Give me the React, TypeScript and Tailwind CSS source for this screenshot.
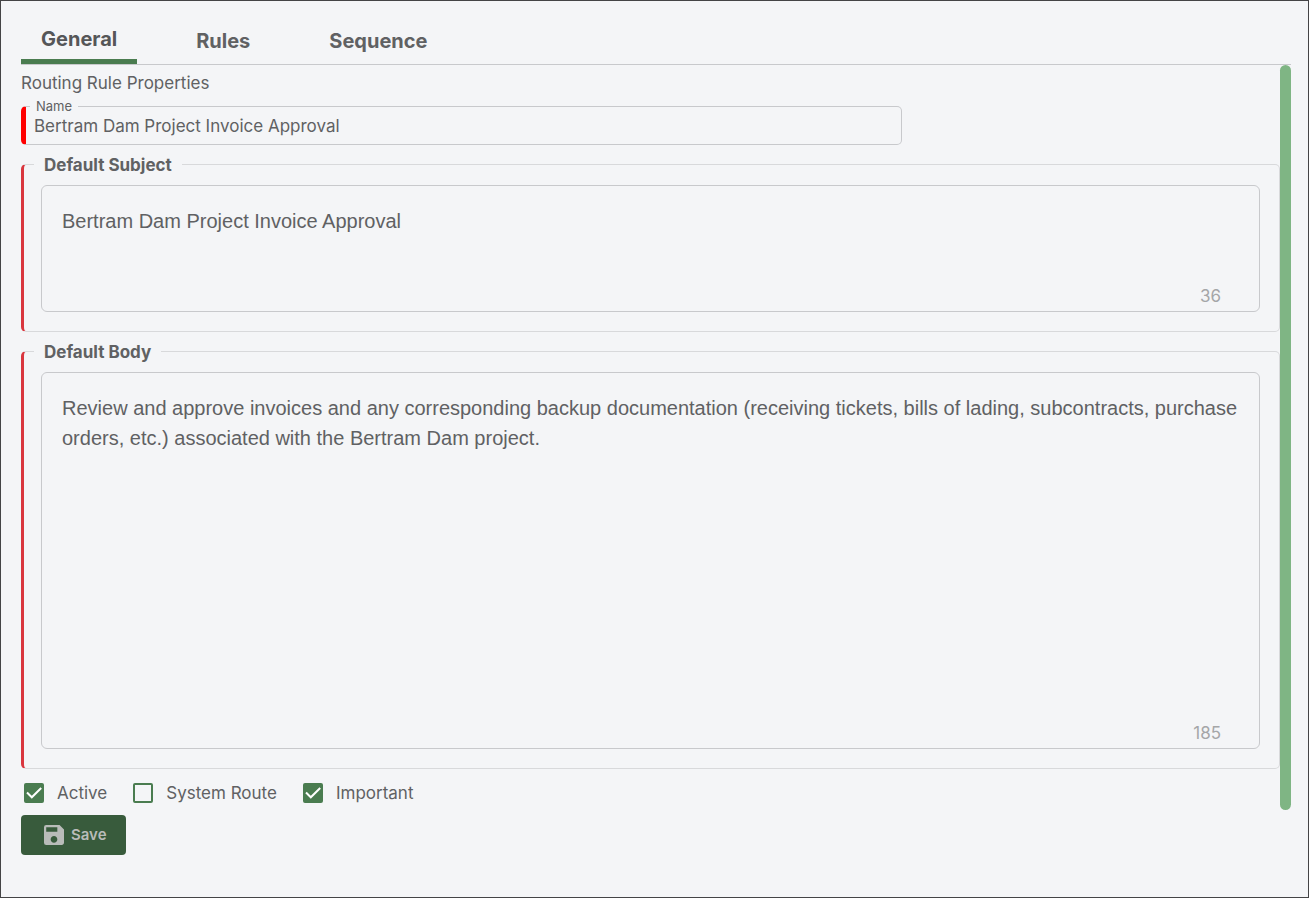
// App.tsx - Routing rule editor, General tab
import { useState } from "react";

const TABS = ["General", "Rules", "Sequence"];

const BODY_TEXT =
  "Review and approve invoices and any corresponding backup documentation (receiving tickets, bills of lading, subcontracts, purchase orders, etc.) associated with the Bertram Dam project.";

function SaveIcon() {
  return (
    <svg viewBox="3 3 18 18" className="h-5 w-5" fill="currentColor" aria-hidden="true">
      <path d="M17 3H5a2 2 0 0 0-2 2v14a2 2 0 0 0 2 2h14c1.1 0 2-.9 2-2V7l-4-4zm-5 16c-1.66 0-3-1.34-3-3s1.34-3 3-3 3 1.34 3 3-1.34 3-3 3zm3-10H5V5h10v4z" />
    </svg>
  );
}

function TextBlock({ id, label, value, onChange, heightClass }: {
  id: string;
  label: string;
  value: string;
  onChange: (v: string) => void;
  heightClass: string;
}) {
  return (
    <fieldset className="min-w-0 rounded-[5px] border border-l-[3px] border-[#d8d9db] border-l-[#d9363e] pb-[19px]">
      <legend className="ml-[10px] px-[10px] pt-[2px] text-[17px] leading-5 font-bold">
        <label htmlFor={id}>{label}</label>
      </legend>
      <div className="relative mt-[10px] ml-[17px] mr-[19px]">
        <textarea
          id={id}
          value={value}
          onChange={(e) => onChange(e.target.value)}
          className={`block w-full resize-none rounded-md border border-[#c8c9cc] bg-transparent p-5 font-['Liberation_Sans',Arial,sans-serif] text-[20px] leading-[30px] outline-none ${heightClass}`}
        />
        <span className="absolute right-[39px] bottom-1 text-[17px] leading-6 text-[#a5a6a8]">{value.length}</span>
      </div>
    </fieldset>
  );
}

function CheckField({ label, initial }: { label: string; initial: boolean }) {
  const [checked, setChecked] = useState(initial);
  return (
    <label className="flex items-center gap-[13px] text-[17px] leading-6">
      <span className="relative h-5 w-5">
        <input
          type="checkbox"
          checked={checked}
          onChange={(e) => setChecked(e.target.checked)}
          className="block h-5 w-5 appearance-none rounded-[2px] border-2 border-[#4a7c50] checked:bg-[#4a7c50]"
        />
        {checked && (
          <svg viewBox="0 0 20 20" className="pointer-events-none absolute inset-0 h-5 w-5" fill="none" stroke="#fff" strokeWidth="2" aria-hidden="true">
            <path d="M3 9.5l4.8 4.8L17.2 5" />
          </svg>
        )}
      </span>
      {label}
    </label>
  );
}

export default function App() {
  const [active, setActive] = useState("General");
  const [name, setName] = useState("Bertram Dam Project Invoice Approval");
  const [subject, setSubject] = useState("Bertram Dam Project Invoice Approval");
  const [body, setBody] = useState(BODY_TEXT);

  return (
    <main className="min-h-screen border border-[#444446] bg-[#f4f5f7] pt-[18px] pr-[17px] pb-10 pl-5 font-[Inter,sans-serif] text-[#606163]">
      {/* Tabs */}
      <div role="tablist" className="flex h-[46px] gap-[39px] border-b border-[#c8c9cc]">
        {TABS.map((tab) => (
          <button
            key={tab}
            type="button"
            role="tab"
            aria-selected={active === tab}
            onClick={() => setActive(tab)}
            className={`px-5 text-[20px] font-bold ${active === tab ? "border-b-[5px] border-[#4a7c50] text-[#555658]" : "pb-[2px]"}`}
          >
            {tab}
          </button>
        ))}
      </div>

      <div className="flex">
        <div className="min-w-0 flex-1 pt-[6px] pb-[5px]">
          <h1 className="text-[17px] leading-6">Routing Rule Properties</h1>

          <fieldset className="mt-[3px] w-[70%] rounded-[5px] border border-l-[5px] border-[#c8c9cc] border-l-[#ff0000]">
            <legend className="ml-1 px-[6px] text-[13px] leading-4">
              <label htmlFor="rule-name">Name</label>
            </legend>
            <input
              id="rule-name"
              type="text"
              value={name}
              onChange={(e) => setName(e.target.value)}
              className="mt-px mb-[5px] block h-6 w-full bg-transparent px-2 text-[17px] outline-none"
            />
          </fieldset>

          <div className="mt-2 flex flex-col gap-2">
            <TextBlock id="default-subject" label="Default Subject" value={subject} onChange={setSubject} heightClass="h-[127px]" />
            <TextBlock id="default-body" label="Default Body" value={body} onChange={setBody} heightClass="h-[377px]" />
          </div>

          <div className="mt-3 ml-[3px] flex gap-[26px]">
            <CheckField label="Active" initial={true} />
            <CheckField label="System Route" initial={false} />
            <CheckField label="Important" initial={true} />
          </div>
        </div>
        {/* Scroll thumb */}
        <div className="w-[11px] rounded-full bg-[#7fb584]" />
      </div>

      <button type="button" className="mt-[5px] flex h-10 items-center gap-[7px] rounded-[4px] bg-[#385b3c] pr-[19px] pl-[23px] text-[15px] font-semibold text-[#b9bcb9]">
        <SaveIcon />
        Save
      </button>
    </main>
  );
}
